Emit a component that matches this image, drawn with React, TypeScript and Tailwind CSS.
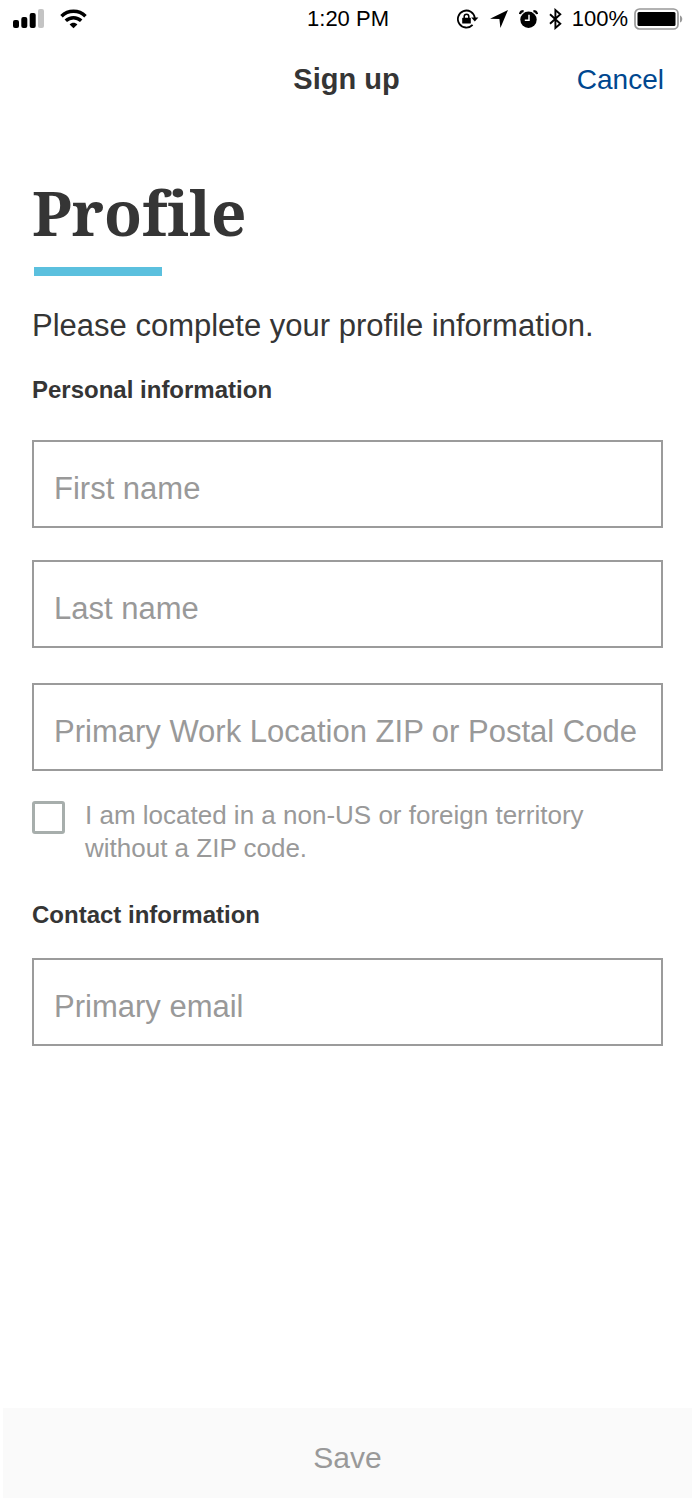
import { useState } from "react";

function SignalIcon() {
  return (
    <svg width="31" height="20" viewBox="0 0 31 20">
      <rect x="0" y="11" width="6" height="8" rx="2" fill="#000" />
      <rect x="8.3" y="8" width="6" height="11" rx="2" fill="#000" />
      <rect x="16.7" y="4" width="6" height="15" rx="2" fill="#000" />
      <rect x="25" y="0" width="6" height="19" rx="2" fill="#c4c4c4" />
    </svg>
  );
}

function WifiIcon() {
  return (
    <svg width="27" height="20" viewBox="0 0 27 20" fill="none" stroke="#000" strokeWidth="3.5">
      <path d="M1.5 7.2C8.2 0.6 18.8 0.6 25.5 7.2" />
      <path d="M5.8 11.8C10.2 7.7 16.8 7.7 21.2 11.8" />
      <path d="M9.6 15.4C11.9 13.3 15.1 13.3 17.4 15.4L13.5 19.2Z" fill="#000" stroke="none" />
    </svg>
  );
}

function RotationLockIcon() {
  return (
    <svg width="22" height="20" viewBox="0 0 22 20" fill="none" stroke="#000">
      <path d="M15.6 15.8A8.5 8.5 0 1 1 17.8 9" strokeWidth="1.8" />
      <path d="M14.2 8.6H21.4L17.8 12.6Z" fill="#000" stroke="none" />
      <rect x="5.2" y="8.8" width="8.6" height="5.8" rx="0.6" fill="#000" stroke="none" />
      <path d="M7.2 9.4V7.6A2.3 2.3 0 0 1 11.8 7.6V9.4" strokeWidth="1.5" />
    </svg>
  );
}

function LocationIcon() {
  return (
    <svg width="18" height="18" viewBox="0 0 18 18">
      <path d="M18 0L10.4 18L9.4 9L0 8.8Z" fill="#000" />
    </svg>
  );
}

function AlarmIcon() {
  return (
    <svg width="19" height="18" viewBox="0 0 19 18">
      <circle cx="9.5" cy="9.8" r="8.2" fill="#000" />
      <path d="M1 4.2C1.2 2.4 2.6 1.2 4.6 1.2" fill="none" stroke="#000" strokeWidth="2.2" />
      <path d="M18 4.2C17.8 2.4 16.4 1.2 14.4 1.2" fill="none" stroke="#000" strokeWidth="2.2" />
      <path d="M10 4.8V10.3H5.8" fill="none" stroke="#fff" strokeWidth="1.5" />
    </svg>
  );
}

function BluetoothIcon() {
  return (
    <svg width="13" height="22" viewBox="0 0 13 22" fill="none" stroke="#000" strokeWidth="1.9">
      <path d="M1 6.2L11.3 15.8L6.4 20V2L11.3 6.2L1 15.8" />
    </svg>
  );
}

function BatteryIcon() {
  return (
    <svg width="49" height="22" viewBox="0 0 49 22">
      <rect x="1" y="1" width="43" height="20" rx="4.5" fill="#fff" stroke="#999" strokeWidth="1.7" />
      <rect x="3.5" y="4" width="38" height="14" rx="1.5" fill="#000" />
      <path d="M46 7.5C49 8.5 49 13.5 46 14.5Z" fill="#999" />
    </svg>
  );
}

type FieldProps = {
  id: string;
  label: string;
  type?: string;
};

function Field({ id, label, type = "text" }: FieldProps) {
  return (
    <input
      id={id}
      type={type}
      aria-label={label}
      placeholder={label}
      className="block w-full h-[88px] border-2 border-[#9b9b9b] bg-white pl-5 pt-[10px] text-[31px] text-[#353535] placeholder:text-[#999999] outline-none focus:border-[#5bc0de]"
    />
  );
}

function App() {
  const [foreign, setForeign] = useState(false);

  return (
    <div className="min-h-screen flex flex-col bg-white text-[#353535] font-['Liberation_Sans',Arial,sans-serif]">
      <div className="h-[38px] grid grid-cols-[1fr_auto_1fr] items-center pl-[13px] pr-[10px] text-[22px] leading-6 text-black">
        <div className="flex items-center gap-4">
          <SignalIcon />
          <WifiIcon />
        </div>
        <span>1:20 PM</span>
        <div className="flex items-center justify-end">
          <div className="flex items-center gap-[11px] pr-[10px]">
            <RotationLockIcon />
            <LocationIcon />
            <AlarmIcon />
            <BluetoothIcon />
          </div>
          <span className="pr-[6px]">100%</span>
          <BatteryIcon />
        </div>
      </div>

      <header className="h-[84px] grid grid-cols-[1fr_auto_1fr] items-center px-[29px]">
        <h2 className="col-start-2 text-[29px] font-bold">Sign up</h2>
        <button type="button" className="justify-self-end text-[28px] text-[#00478f]">
          Cancel
        </button>
      </header>

      <form id="profile" className="pl-8 pr-[30px] pt-[50px]">
        <h1 className="text-[62px] leading-[80px] font-bold [font-variant-ligatures:none] font-['Noto_Serif','DejaVu_Serif',serif]">
          Profile
        </h1>
        <div className="mt-[15px] ml-[2px] w-32 h-[9px] bg-[#5bc0de]"></div>
        <p className="mt-[30px] text-[31px] leading-10">
          Please complete your profile information.
        </p>

        <h3 className="mt-7 text-2xl font-bold">Personal information</h3>
        <div className="mt-[34px] flex flex-col gap-8">
          <Field id="first-name" label="First name" />
          <Field id="last-name" label="Last name" />
        </div>
        <div className="mt-[35px]">
          <Field id="zip" label="Primary Work Location ZIP or Postal Code" />
        </div>

        <div className="mt-7 flex items-start gap-5">
          <input
            id="foreign"
            type="checkbox"
            checked={foreign}
            onChange={(e) => setForeign(e.target.checked)}
            className="appearance-none shrink-0 mt-[2px] size-[33px] rounded-[3px] border-[3px] border-[#a7aeac] bg-white checked:bg-[#5bc0de]"
          />
          <label htmlFor="foreign" className="max-w-[520px] text-[26px] leading-[33px] text-[#999999]">
            I am located in a non-US or foreign territory without a ZIP code.
          </label>
        </div>

        <h3 className="mt-[34px] text-2xl font-bold">Contact information</h3>
        <div className="mt-[27px]">
          <Field id="email" label="Primary email" type="email" />
        </div>
      </form>

      <footer className="mt-auto pl-[3px] pr-px pb-[2px]">
        <button
          type="submit"
          form="profile"
          className="w-full h-[90px] pt-2 bg-[#fafafa] text-[30px] text-[#999999]"
        >
          Save
        </button>
      </footer>
    </div>
  );
}

export default App;
